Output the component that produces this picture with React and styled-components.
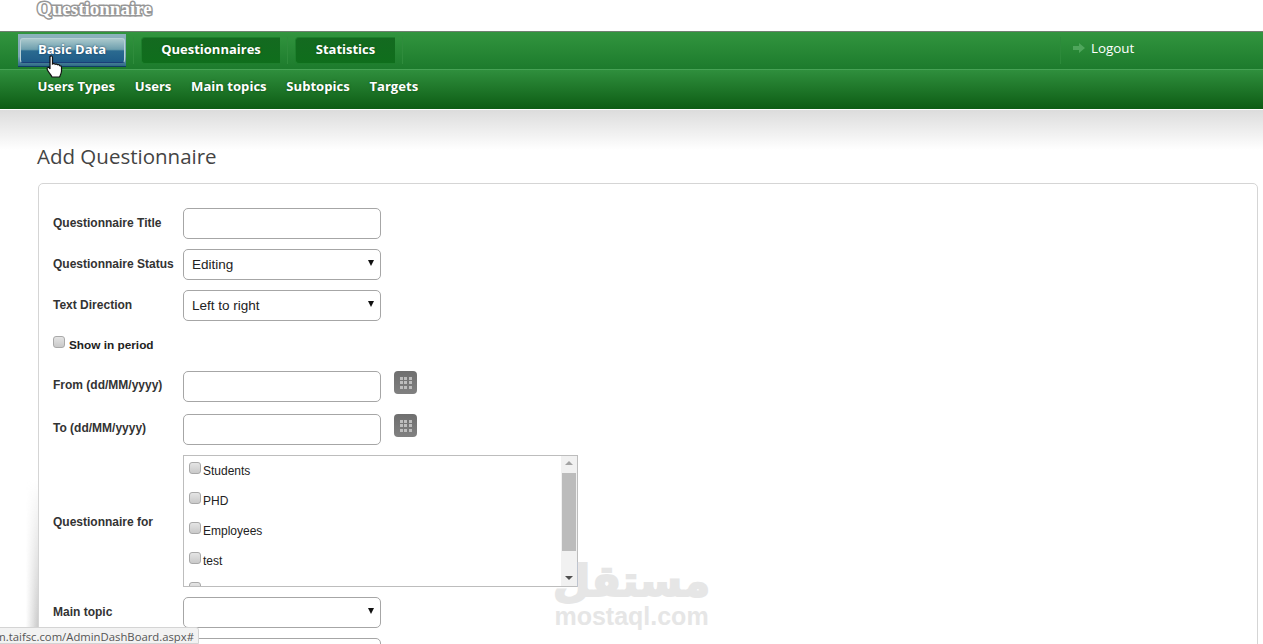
import React from "react";
import styled, { createGlobalStyle } from "styled-components";

const GlobalStyle = createGlobalStyle`
  html, body {
    margin: 0;
    padding: 0;
    height: 100%;
    overflow: hidden;
    background: #fff;
  }
  * {
    box-sizing: border-box;
  }
`;

const Page = styled.div`
  position: relative;
  width: 100%;
  height: 644px;
  overflow: hidden;
  font-family: "Liberation Sans", Arial, sans-serif;
`;
const Top_bar = styled.div`
  height: 31px;
  padding-left: 37px;
  background: #fff;
  overflow: hidden;
`;
const Logo = styled.div`
  margin-top: -2px;
  font-family: "Liberation Serif", serif;
  font-size: 19px;
  line-height: 22px;
  font-weight: 700;
  color: #fff;
  -webkit-text-stroke: 3px #979797;
  paint-order: stroke fill;
`;
const Nav = styled.div`
  height: 78px;
  border-top: 1px solid #6f7f70;
  background: linear-gradient(#32953f, #1c7a2c 38px, #2f8f3d 38px, #0d5c14 77px);
`;
const Nav_row = styled.div`
  height: 38px;
  display: flex;
  align-items: flex-start;
  padding: 5px 0 0 18px;
  border-bottom: 1px solid #47a255;
`;
const Tab = styled.div`
  width: ${(p) => p.$w}px;
  height: 27px;
  margin-right: ${(p) => p.$gap}px;
  padding-bottom: 4px;
  display: flex;
  align-items: center;
  justify-content: center;
  border-radius: 4px 0 0 4px;
  background: linear-gradient(#146a20, #0f6e1c);
  border: 1px solid #1d7f2c;
  border-right: none;
  color: #fff;
  font-family: "Open Sans", sans-serif;
  font-size: 13px;
  font-weight: 700;
  text-shadow: 0 0 2px #0a4a10;
`;
const Active_tab = styled.div`
  width: 108px;
  height: 33px;
  flex: none;
  margin: -3px 7px 0 0;
  padding: 4px 1px 3px 2px;
  background: linear-gradient(#8db2bd, #7ba7b5 70%, #2d6a86);
  border-bottom: 1px solid #123c66;
`;
const Active_inner = styled.div`
  height: 100%;
  padding: 0 1px 4px 0;
  display: flex;
  align-items: center;
  justify-content: center;
  border: 1px solid #b8d0d6;
  border-bottom-color: #1a3f78;
  border-radius: 3px;
  background: linear-gradient(#a9c8cc, #6e9fae 45%, #2a6a90 52%, #1f5c88);
  color: #fff;
  font-family: "Open Sans", sans-serif;
  font-size: 13px;
  font-weight: 700;
  text-shadow: 0 0 2px #12365a;
`;
const Divider = styled.div`
  width: 1px;
  height: 27px;
  margin-right: ${(p) => p.$gap}px;
  background: #2f8c3c;
`;
const Logout = styled.div`
  margin-left: auto;
  width: 203px;
  height: 27px;
  display: flex;
  align-items: center;
  gap: 6px;
  padding: 0 0 5px 12px;
  border-left: 1px solid #2c8a3a;
  color: #fff;
  font-family: "Open Sans", sans-serif;
  font-size: 13.4px;
  font-weight: 500;
`;
const Sub_row = styled.div`
  height: 38px;
  display: flex;
  align-items: center;
  gap: 19.7px;
  padding: 0 0 6px 37.5px;
  color: #fff;
  font-family: "Open Sans", sans-serif;
  font-size: 13.1px;
  font-weight: 700;
  text-shadow: 0 0 2px #0a4a10;
`;
const Content = styled.div`
  height: 535px;
  margin-top: 1px;
  padding: 32px 5px 0 38px;
  background: linear-gradient(#dcdcdc, #fff 40px);
`;
const Title = styled.h1`
  margin: 0 0 13px -1px;
  font-family: "Open Sans", sans-serif;
  font-size: 20.5px;
  line-height: 28px;
  font-weight: 400;
  color: #444;
`;
const Card = styled.div`
  height: 500px;
  padding: 24px 14px 0;
  background: #fff;
  border: 1px solid #d5d5d5;
  border-radius: 5px;
`;
const Card_shadow = styled.div`
  position: absolute;
  left: 26px;
  top: 480px;
  width: 12px;
  height: 164px;
  background: linear-gradient(to right, rgba(200, 200, 200, 0), #c4c4c4);
  mask-image: linear-gradient(transparent, #000);
`;
const Row = styled.div`
  display: flex;
  align-items: center;
  margin-bottom: ${(p) => p.$mb}px;
`;
const Label = styled.label`
  width: 130px;
  flex: none;
  margin-top: ${(p) => p.$mt ?? -1}px;
  font-size: 12px;
  font-weight: 700;
  color: #333;
`;
const Text_input = styled.input`
  width: 198px;
  height: 31px;
  flex: none;
  background: #fff;
  border: 1px solid #a6a6a6;
  border-radius: 5px;
`;
const Select_wrap = styled.div`
  position: relative;
  width: 198px;
  height: 31px;
  flex: none;
  &::after {
    content: "";
    position: absolute;
    right: 7px;
    top: 11px;
    border: 3.5px solid transparent;
    border-top: 6px solid #111;
    border-bottom: none;
  }
`;
const Select = styled.select`
  appearance: none;
  width: 100%;
  height: 100%;
  padding: 0 0 0 8px;
  background: #fff;
  border: 1px solid #a6a6a6;
  border-radius: 5px;
  font-family: "Liberation Sans", Arial, sans-serif;
  font-size: 13.5px;
  color: #222;
`;
const Check = styled.input.attrs({ type: "checkbox" })`
  appearance: none;
  width: 12px;
  height: 12px;
  margin: 0;
  flex: none;
  border: 1px solid #a9a9a9;
  border-radius: 3px;
  background: linear-gradient(#e4e4e4, #c9c9c9);
`;
const Period_row = styled.div`
  display: flex;
  gap: 4px;
  height: 40px;
  padding-top: 5px;
  font-size: 11.8px;
  font-weight: 700;
  color: #222;
`;
const Period_text = styled.span`
  margin-top: 2px;
`;
const Calendar_btn = styled.div`
  width: 23px;
  height: 23px;
  flex: none;
  margin: -8px 0 0 13px;
  display: grid;
  grid-template-columns: repeat(3, 3px);
  grid-auto-rows: 3px;
  gap: 1.5px;
  place-content: center;
  border-radius: 4px;
  background: linear-gradient(#6f6f6f, #808080);
`;
const Calendar_dot = styled.span`
  background: #bdbdbd;
`;
const List_box = styled.div`
  width: 395px;
  height: 132px;
  flex: none;
  display: flex;
  border: 1px solid #bdbdbd;
  overflow: hidden;
`;
const List_items = styled.div`
  flex: 1;
  padding: 6px 5px 0;
`;
const List_item = styled.div`
  height: 30px;
  display: flex;
  gap: 2px;
  font-size: 12px;
  color: #222;
`;
const Item_text = styled.span`
  margin-top: 2px;
`;
const Scroll_track = styled.div`
  position: relative;
  width: 16px;
  flex: none;
  padding: 17px 1px 0;
  background: #f1f1f1;
  &::before,
  &::after {
    content: "";
    position: absolute;
    left: 4px;
    border: 4px solid transparent;
  }
  &::before {
    top: 5px;
    border-bottom: 4px solid #a3a3a3;
    border-top: none;
  }
  &::after {
    bottom: 6px;
    border-top: 4px solid #505050;
    border-bottom: none;
  }
`;
const Scroll_thumb = styled.div`
  height: 78px;
  background: #bcbcbc;
`;
const Status_bar = styled.div`
  position: absolute;
  left: -4px;
  bottom: 0;
  width: 203px;
  height: 17px;
  padding: 0 4px 0 0;
  background: #f2f2f2;
  border: 1px solid #d4d4d4;
  border-radius: 0 3px 0 0;
  font-family: "Open Sans", sans-serif;
  font-size: 11.3px;
  line-height: 17px;
  color: #555;
  white-space: nowrap;
  direction: rtl;
  overflow: hidden;
`;
const Watermark = styled.div`
  position: absolute;
  left: 555px;
  top: 558px;
  width: 153px;
  display: flex;
  flex-direction: column;
  align-items: center;
  color: #e6e6e6;
  font-family: "Liberation Sans", sans-serif;
  font-weight: 700;
  pointer-events: none;
`;
const Watermark_ar = styled.div`
  font-family: "DejaVu Sans", sans-serif;
  font-size: 43px;
  line-height: 46px;
  -webkit-text-stroke: 2px #e6e6e6;
`;
const Watermark_en = styled.div`
  font-size: 25px;
  line-height: 24px;
`;
const Cursor = styled.svg`
  position: absolute;
  left: 46px;
  top: 55px;
`;

const tabs = [
  { name: "Questionnaires", w: 139, gap: 7 },
  { name: "Statistics", w: 100, gap: 7 },
];
const sub_links = ["Users Types", "Users", "Main topics", "Subtopics", "Targets"];
const list_items = ["Students", "PHD", "Employees", "test", ""];

function Calendar() {
  return (
    <Calendar_btn>
      {Array.from({ length: 9 }).map((_, i) => (
        <Calendar_dot key={i} />
      ))}
    </Calendar_btn>
  );
}

function App() {
  return (
    <Page>
      <GlobalStyle />
      <Top_bar>
        <Logo>Questionnaire</Logo>
      </Top_bar>
      <Nav>
        <Nav_row>
          <Active_tab>
            <Active_inner>Basic Data</Active_inner>
          </Active_tab>
          <Divider $gap={7} />
          {tabs.map((t) => (
            <React.Fragment key={t.name}>
              <Tab $w={t.w} $gap={t.gap}>
                {t.name}
              </Tab>
              <Divider $gap={7} />
            </React.Fragment>
          ))}
          <Logout>
            <svg width="12" height="10" viewBox="0 0 12 10">
              <path d="M0 3h6V0l6 5-6 5V7H0z" fill="#4fa65c" />
            </svg>
            Logout
          </Logout>
        </Nav_row>
        <Sub_row>
          {sub_links.map((s) => (
            <span key={s}>{s}</span>
          ))}
        </Sub_row>
      </Nav>
      <Content>
        <Title>Add Questionnaire</Title>
        <Card>
          <Row $mb={10}>
            <Label>Questionnaire Title</Label>
            <Text_input />
          </Row>
          <Row $mb={10}>
            <Label>Questionnaire Status</Label>
            <Select_wrap>
              <Select defaultValue="Editing">
                <option>Editing</option>
              </Select>
            </Select_wrap>
          </Row>
          <Row $mb={10}>
            <Label>Text Direction</Label>
            <Select_wrap>
              <Select defaultValue="Left to right">
                <option>Left to right</option>
              </Select>
            </Select_wrap>
          </Row>
          <Period_row>
            <Check />
            <Period_text>Show in period</Period_text>
          </Period_row>
          <Row $mb={12}>
            <Label $mt={-3}>From (dd/MM/yyyy)</Label>
            <Text_input />
            <Calendar />
          </Row>
          <Row $mb={10}>
            <Label $mt={-3}>To (dd/MM/yyyy)</Label>
            <Text_input />
            <Calendar />
          </Row>
          <Row $mb={10}>
            <Label $mt={1}>Questionnaire for</Label>
            <List_box>
              <List_items>
                {list_items.map((item, i) => (
                  <List_item key={i}>
                    <Check />
                    <Item_text>{item}</Item_text>
                  </List_item>
                ))}
              </List_items>
              <Scroll_track>
                <Scroll_thumb />
              </Scroll_track>
            </List_box>
          </Row>
          <Row $mb={10}>
            <Label>Main topic</Label>
            <Select_wrap>
              <Select />
            </Select_wrap>
          </Row>
          <Row $mb={10}>
            <Label />
            <Text_input />
          </Row>
        </Card>
      </Content>
      <Card_shadow />
      <Cursor width="18" height="24" viewBox="0 0 18 24">
        <path
          d="M4 1.500c1-1 2.500-.5 2.500 1V9l1-.5c1 0 1.500.3 1.700.8 1-.5 2-.3 2.300.5 1-.3 2 0 2.200.8 1 0 1.800.4 1.800 1.400v4c0 2.500-1 4-2 6H6c-1-2-2.500-3.500-4-6-1-1.500-1.500-3 0-3.500 1-.3 1.500.5 2 1.500z"
          fill="#fff"
          stroke="#111"
          strokeWidth="1.200"
        />
      </Cursor>
      <Watermark>
        <Watermark_ar>مستقل</Watermark_ar>
        <Watermark_en>mostaql.com</Watermark_en>
      </Watermark>
      <Status_bar>
        <bdi>http://system.taifsc.com/AdminDashBoard.aspx#</bdi>
      </Status_bar>
    </Page>
  );
}

export default App;
